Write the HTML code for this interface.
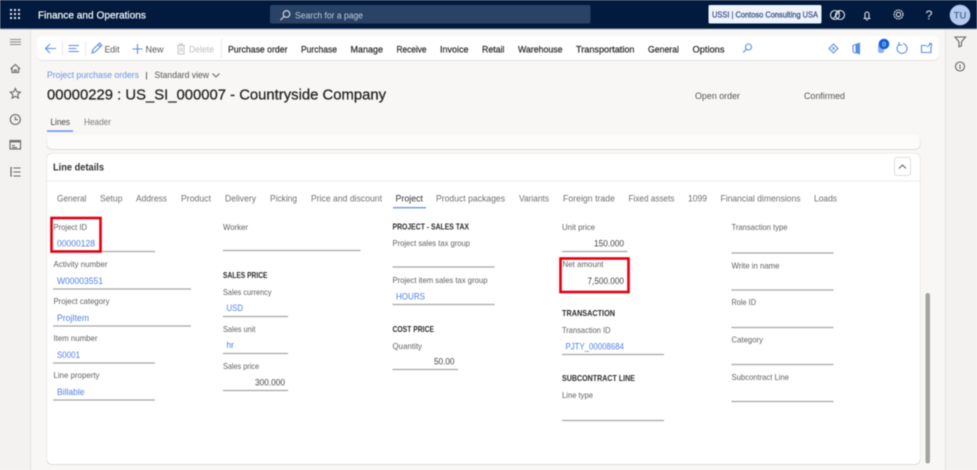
<!DOCTYPE html>
<html lang="en"><head><meta charset="utf-8"><title>Project purchase orders</title>
<style>
html,body{margin:0;padding:0;width:977px;height:470px;overflow:hidden;background:#f8f7f5}
svg{display:block;filter:blur(.45px)}
text{font-family:"Liberation Sans",sans-serif;font-size:9px;white-space:pre}
.l{fill:#616161;font-size:8.5px}
.v{fill:#4f7fe6;font-size:9px}
.n{fill:#444;font-size:9px}
.h{fill:#2a2a2a;font-size:8.5px;font-weight:bold}
.t{fill:#6f6f6f;font-size:9px}
.b{fill:#2b2b2b;font-size:9px;stroke:#2b2b2b;stroke-width:.22}
.u{stroke:#a6a6a6;stroke-width:1.2;fill:none}
.i{fill:none;stroke:#5b8be6;stroke-width:1.1}
.s{fill:none;stroke:#666;stroke-width:1.1}
.w{fill:none;stroke:#dfe3ea;stroke-width:1.1}
</style></head><body>
<svg width="977" height="470" viewBox="0 0 977 470" xmlns="http://www.w3.org/2000/svg">
<!-- backgrounds -->
<rect width="977" height="470" fill="#f8f7f5"/>
<rect x="0" y="29" width="30" height="441" fill="#f3f2f0"/><rect x="30" y="29" width="1" height="441" fill="#e3e2e0"/>
<rect x="945" y="29" width="32" height="441" fill="#f3f2f0"/><rect x="945" y="29" width="1" height="441" fill="#e3e2e0"/>
<!-- top bar -->
<rect width="977" height="28.5" fill="#011a3d"/>
<rect y="28.5" width="977" height="1" fill="#9aa5b5"/>
<g fill="#e6e9ee"><rect x="10" y="9" width="2" height="2"/><rect x="14" y="9" width="2" height="2"/><rect x="18" y="9" width="2" height="2"/><rect x="10" y="13" width="2" height="2"/><rect x="14" y="13" width="2" height="2"/><rect x="18" y="13" width="2" height="2"/><rect x="10" y="17" width="2" height="2"/><rect x="14" y="17" width="2" height="2"/><rect x="18" y="17" width="2" height="2"/></g>
<text x="38" y="18.5" textLength="108" lengthAdjust="spacingAndGlyphs" style="font-size:10.5px;fill:#fff;stroke:#fff;stroke-width:.2">Finance and Operations</text>
<rect x="270" y="5" width="320.500" height="18.500" rx="2" fill="#2a4266"/>
<circle cx="286.500" cy="14" r="3.300" class="w"/><path d="M284 16.500L280.500 20" class="w"/>
<text x="295" y="18.500" textLength="68" lengthAdjust="spacingAndGlyphs" style="fill:#c3ccd9">Search for a page</text>
<rect x="708.500" y="5" width="113" height="18.500" rx="1.500" fill="#eef3fc"/>
<text x="712" y="17.500" textLength="106" lengthAdjust="spacingAndGlyphs" style="font-size:8.500px;fill:#35507f;stroke:#35507f;stroke-width:.25">USSI | Contoso Consulting USA</text>
<circle cx="835" cy="15" r="4.500" class="w"/><circle cx="840" cy="15" r="4.500" class="w"/><path d="M833 19L840 10.500" class="w"/>
<path d="M863.500 18.500h7M865 18c0-1 0-2.500 0-4a2 2 0 0 1 4 0c0 1.500 0 3 0 4M866 20h2" class="w"/>
<circle cx="898.500" cy="14.500" r="4.500" class="w" stroke-dasharray="2 .6"/><circle cx="898.500" cy="14.500" r="2.200" class="w"/>
<text x="925.500" y="19.500" style="font-size:12.500px;fill:#dfe3ea">?</text>
<circle cx="960" cy="15" r="10.300" fill="#b5caf0"/>
<text x="960" y="18.500" text-anchor="middle" style="font-size:9.500px;fill:#2f4d78">TU</text>
<!-- side icons left -->
<path d="M10 39.500h11M10 42h11M10 44.500h11" stroke="#8a8a8a" stroke-width="1.100" fill="none"/>
<path d="M10.500 69l4.800-4.500 4.800 4.500M12 68v4.500h6.600V68M14.300 72.500v-2.500h2v2.500" class="s"/>
<path d="M15.300 88.500l1.500 3.300 3.500.4-2.600 2.400.7 3.500-3.100-1.800-3.100 1.800.7-3.500-2.600-2.400 3.500-.4z" class="s"/>
<circle cx="15.300" cy="119.500" r="5" class="s"/><path d="M15.300 116.500v3.200h2.700" class="s"/>
<rect x="10" y="140.500" width="10.500" height="8.500" class="s" fill="none"/><rect x="10" y="140.500" width="10.500" height="2" fill="#777"/><path d="M12 145.500h3M12 147.500h5" class="s"/>
<path d="M13.500 168h7M13.500 172h7M13.500 176h7M11 167.500v9" class="s"/><rect x="10.300" y="167" width="1.600" height="1.600" fill="#777"/><rect x="10.300" y="171" width="1.600" height="1.600" fill="#777"/><rect x="10.300" y="175" width="1.600" height="1.600" fill="#777"/>
<!-- side icons right -->
<path d="M955 37h10.500l-4 4.800v4l-2.500 1v-5z" class="s" stroke-width="1.300"/>
<circle cx="960" cy="66.500" r="4.500" class="s"/><path d="M960 64.500v4.500" class="s"/>
<!-- toolbar -->
<rect x="37.500" y="37" width="901" height="24" rx="5" fill="#d9d8d6" opacity=".7"/>
<rect x="37" y="36" width="901.500" height="24" rx="5" fill="#fff"/>
<path d="M56 48.500H46M50 44l-4.500 4.500L50 53" class="i"/>
<rect x="62" y="41" width="1" height="15" fill="#e8e8e8"/><rect x="85" y="41" width="1" height="15" fill="#e8e8e8"/><rect x="221" y="39" width="1" height="19" fill="#e8e8e8"/>
<path d="M68.500 45.500h10.500M68.500 48.500h8M68.500 51.500h10.500" class="i"/>
<path d="M92 53l1-3.500 6.500-6.500 2.300 2.300-6.500 6.500zM98 44.500l2.300 2.300" class="i"/>
<text x="104.500" y="52.500" textLength="15" lengthAdjust="spacingAndGlyphs" class="t" style="fill:#555">Edit</text>
<path d="M137.500 44v10M132.500 49h10" class="i"/>
<text x="145.500" y="52.500" textLength="18" lengthAdjust="spacingAndGlyphs" class="t" style="fill:#555">New</text>
<path d="M177 45.500h8M178 45.500v8.500h6v-8.500M179.500 45.500v-1.500h3v1.500M180 47.500v4.500M182 47.500v4.500" fill="none" stroke="#c4c4c4"/>
<text x="189" y="52.500" textLength="25" lengthAdjust="spacingAndGlyphs" style="fill:#bdbdbd">Delete</text>
<text x="228" y="52.500" textLength="59.500" lengthAdjust="spacingAndGlyphs" class="b">Purchase order</text>
<text x="301" y="52.500" textLength="36" lengthAdjust="spacingAndGlyphs" class="b">Purchase</text>
<text x="350.500" y="52.500" textLength="32.500" lengthAdjust="spacingAndGlyphs" class="b">Manage</text>
<text x="396.500" y="52.500" textLength="30" lengthAdjust="spacingAndGlyphs" class="b">Receive</text>
<text x="440" y="52.500" textLength="28.500" lengthAdjust="spacingAndGlyphs" class="b">Invoice</text>
<text x="482" y="52.500" textLength="22.500" lengthAdjust="spacingAndGlyphs" class="b">Retail</text>
<text x="518" y="52.500" textLength="44.500" lengthAdjust="spacingAndGlyphs" class="b">Warehouse</text>
<text x="576" y="52.500" textLength="58.500" lengthAdjust="spacingAndGlyphs" class="b">Transportation</text>
<text x="648" y="52.500" textLength="31" lengthAdjust="spacingAndGlyphs" class="b">General</text>
<text x="692.500" y="52.500" textLength="32" lengthAdjust="spacingAndGlyphs" class="b">Options</text>
<circle cx="748.500" cy="47" r="3" class="i"/><path d="M746.300 49.300L743 52.500" class="i"/>
<path d="M833.500 44l4.500 4.500-4.500 4.500-4.500-4.500z" class="i" stroke-width="1.500"/><circle cx="833.500" cy="48.500" r="1.600" fill="#8fb0ee"/>
<path d="M855.500 44l4.500-1.500v12l-4.500-1.500z" fill="#5b8be6"/><path d="M855.500 44.500l-2.500 1v6l2.500 2" class="i" stroke-width="1.300"/>
<rect x="878" y="44" width="6" height="9" rx="2" fill="#8fb0ee"/>
<circle cx="884" cy="44" r="5.300" fill="#1261d8"/><text x="884" y="46.500" text-anchor="middle" style="font-size:6.500px;fill:#fff">0</text>
<path d="M899 44.500a5 5 0 1 0 4-1" class="i" stroke-width="1.300"/><path d="M899 42v3h3" class="i" stroke-width=".8"/>
<path d="M931 46v6.500h-9.500V45.500h5" class="i" stroke-width="1.200"/><path d="M927 47l4-3.500M929 43.500h2.500v2.500" class="i"/>
<!-- header -->
<text x="47" y="78" textLength="92" lengthAdjust="spacingAndGlyphs" style="fill:#6b93e4">Project purchase orders</text>
<rect x="146" y="72" width="1" height="7.500" fill="#666"/>
<text x="154.500" y="78" textLength="54.500" lengthAdjust="spacingAndGlyphs" style="fill:#555">Standard view</text>
<path d="M212.500 73.500l3.500 3.500 3.500-3.500" class="s"/>
<text x="47" y="99.500" textLength="339" lengthAdjust="spacingAndGlyphs" style="font-size:15px;fill:#222;stroke:#222;stroke-width:.25">00000229 : US_SI_000007 - Countryside Company</text>
<text x="695" y="99" textLength="45" lengthAdjust="spacingAndGlyphs" class="t" style="fill:#555">Open order</text>
<text x="804" y="99" textLength="41" lengthAdjust="spacingAndGlyphs" class="t" style="fill:#555">Confirmed</text>
<text x="50.500" y="125" textLength="19.500" lengthAdjust="spacingAndGlyphs" style="fill:#444">Lines</text>
<text x="84" y="125" textLength="27" lengthAdjust="spacingAndGlyphs" style="fill:#7a7a7a">Header</text>
<rect x="47" y="130.300" width="26" height="1.600" fill="#6d97e8"/>
<!-- cards -->
<rect x="46.500" y="136" width="874" height="14" rx="5" fill="#dedddb"/>
<rect x="47" y="135" width="873" height="14" rx="5" fill="#fdfcfb"/>
<rect x="46.500" y="153" width="874" height="312" rx="5" fill="#dddcda"/>
<rect x="47" y="153.500" width="873" height="310.500" rx="5" fill="#fff"/>
<rect x="47" y="180.500" width="873" height="1.200" fill="#eeeded"/>
<text x="53" y="170.500" textLength="51" lengthAdjust="spacingAndGlyphs" style="font-size:10px;font-weight:bold;fill:#333">Line details</text>
<rect x="894.500" y="157.500" width="16" height="18" rx="2" fill="#fff" stroke="#ddd"/>
<path d="M899 168.500l3.500-3.500 3.500 3.500" class="s"/>
<!-- tabs -->
<g class="t">
<text x="57" y="201.500" textLength="29.500" lengthAdjust="spacingAndGlyphs" class="t">General</text>
<text x="100" y="201.500" textLength="22.500" lengthAdjust="spacingAndGlyphs" class="t">Setup</text>
<text x="136" y="201.500" textLength="31" lengthAdjust="spacingAndGlyphs" class="t">Address</text>
<text x="181" y="201.500" textLength="30" lengthAdjust="spacingAndGlyphs" class="t">Product</text>
<text x="225" y="201.500" textLength="31" lengthAdjust="spacingAndGlyphs" class="t">Delivery</text>
<text x="270" y="201.500" textLength="27" lengthAdjust="spacingAndGlyphs" class="t">Picking</text>
<text x="311" y="201.500" textLength="71" lengthAdjust="spacingAndGlyphs" class="t">Price and discount</text>
<text x="395.500" y="201.500" textLength="27.500" lengthAdjust="spacingAndGlyphs" style="fill:#333">Project</text>
<text x="436" y="201.500" textLength="69" lengthAdjust="spacingAndGlyphs" class="t">Product packages</text>
<text x="519" y="201.500" textLength="30" lengthAdjust="spacingAndGlyphs" class="t">Variants</text>
<text x="563" y="201.500" textLength="52" lengthAdjust="spacingAndGlyphs" class="t">Foreign trade</text>
<text x="628.500" y="201.500" textLength="46" lengthAdjust="spacingAndGlyphs" class="t">Fixed assets</text>
<text x="688" y="201.500" textLength="19" lengthAdjust="spacingAndGlyphs" class="t">1099</text>
<text x="720.500" y="201.500" textLength="80" lengthAdjust="spacingAndGlyphs" class="t">Financial dimensions</text>
<text x="814" y="201.500" textLength="23" lengthAdjust="spacingAndGlyphs" class="t">Loads</text>
</g>
<rect x="393" y="207" width="33" height="1.400" fill="#6d97e8"/>
<!-- col 1 -->
<text x="53.500" y="230" textLength="33.500" lengthAdjust="spacingAndGlyphs" class="l">Project ID</text>
<text x="57" y="246.500" textLength="38" lengthAdjust="spacingAndGlyphs" class="v">00000128</text>
<path d="M53 251.500h102" class="u"/>
<text x="53.500" y="267" textLength="54" lengthAdjust="spacingAndGlyphs" class="l">Activity number</text>
<text x="57" y="284" textLength="46" lengthAdjust="spacingAndGlyphs" class="v">W00003551</text>
<path d="M53 289h138" class="u"/>
<text x="53.500" y="304" textLength="56" lengthAdjust="spacingAndGlyphs" class="l">Project category</text>
<text x="57" y="321" textLength="32" lengthAdjust="spacingAndGlyphs" class="v">ProjItem</text>
<path d="M53 326h138" class="u"/>
<text x="53.500" y="341" textLength="44" lengthAdjust="spacingAndGlyphs" class="l">Item number</text>
<text x="57" y="358" textLength="23" lengthAdjust="spacingAndGlyphs" class="v">S0001</text>
<path d="M53 363h102" class="u"/>
<text x="53.500" y="378" textLength="46" lengthAdjust="spacingAndGlyphs" class="l">Line property</text>
<text x="57" y="395" textLength="27.500" lengthAdjust="spacingAndGlyphs" class="v">Billable</text>
<path d="M53 400h102" class="u"/>
<!-- col 2 -->
<text x="223" y="230" textLength="25" lengthAdjust="spacingAndGlyphs" class="l">Worker</text>
<path d="M223 250.500h137.500" class="u"/>
<text x="223" y="278" textLength="44.500" lengthAdjust="spacingAndGlyphs" class="h">SALES PRICE</text>
<text x="223" y="295" textLength="48.500" lengthAdjust="spacingAndGlyphs" class="l">Sales currency</text>
<text x="226.500" y="311" textLength="16.500" lengthAdjust="spacingAndGlyphs" class="v">USD</text>
<path d="M223 316.500h65" class="u"/>
<text x="223" y="332" textLength="32.500" lengthAdjust="spacingAndGlyphs" class="l">Sales unit</text>
<text x="226.500" y="348" textLength="7.500" lengthAdjust="spacingAndGlyphs" class="v">hr</text>
<path d="M223 353.500h65" class="u"/>
<text x="223" y="369" textLength="36" lengthAdjust="spacingAndGlyphs" class="l">Sales price</text>
<text x="255" y="385.500" textLength="30" lengthAdjust="spacingAndGlyphs" class="n">300.000</text>
<path d="M223 390.500h65" class="u"/>
<!-- col 3 -->
<text x="392.500" y="229.500" textLength="76.500" lengthAdjust="spacingAndGlyphs" class="h">PROJECT - SALES TAX</text>
<text x="392.500" y="246" textLength="77.500" lengthAdjust="spacingAndGlyphs" class="l">Project sales tax group</text>
<path d="M392.500 267h102" class="u"/>
<text x="392.500" y="283" textLength="95" lengthAdjust="spacingAndGlyphs" class="l">Project item sales tax group</text>
<text x="396" y="299.500" textLength="29" lengthAdjust="spacingAndGlyphs" class="v">HOURS</text>
<path d="M392.500 304.500h102" class="u"/>
<text x="392.500" y="332" textLength="41.500" lengthAdjust="spacingAndGlyphs" class="h">COST PRICE</text>
<text x="392.500" y="349" textLength="29.500" lengthAdjust="spacingAndGlyphs" class="l">Quantity</text>
<text x="434" y="364.500" textLength="20.500" lengthAdjust="spacingAndGlyphs" class="n">50.00</text>
<path d="M392.500 369.500h65.500" class="u"/>
<!-- col 4 -->
<text x="562" y="230" textLength="33" lengthAdjust="spacingAndGlyphs" class="l">Unit price</text>
<text x="594" y="246.500" textLength="30" lengthAdjust="spacingAndGlyphs" class="n">150.000</text>
<path d="M562 251.500h65.500" class="u"/>
<text x="562.500" y="267" textLength="41" lengthAdjust="spacingAndGlyphs" class="l">Net amount</text>
<text x="587.500" y="284" textLength="36.500" lengthAdjust="spacingAndGlyphs" class="n">7,500.000</text>
<text x="562" y="316" textLength="53" lengthAdjust="spacingAndGlyphs" class="h">TRANSACTION</text>
<text x="562" y="333" textLength="48.500" lengthAdjust="spacingAndGlyphs" class="l">Transaction ID</text>
<text x="565.500" y="349.500" textLength="58.500" lengthAdjust="spacingAndGlyphs" class="v">PJTY_00008684</text>
<path d="M562 354.500h102" class="u"/>
<text x="562" y="381" textLength="73" lengthAdjust="spacingAndGlyphs" class="h">SUBCONTRACT LINE</text>
<text x="562" y="398" textLength="31" lengthAdjust="spacingAndGlyphs" class="l">Line type</text>
<path d="M562 420.500h102" class="u"/>
<!-- col 5 -->
<text x="731.500" y="230" textLength="56" lengthAdjust="spacingAndGlyphs" class="l">Transaction type</text>
<path d="M731.500 253h102" class="u"/>
<text x="731.500" y="268.500" textLength="48" lengthAdjust="spacingAndGlyphs" class="l">Write in name</text>
<path d="M731.500 290h102" class="u"/>
<text x="731.500" y="305" textLength="24.500" lengthAdjust="spacingAndGlyphs" class="l">Role ID</text>
<path d="M731.500 327.500h102" class="u"/>
<text x="731.500" y="342.500" textLength="31.500" lengthAdjust="spacingAndGlyphs" class="l">Category</text>
<path d="M731.500 364.500h102" class="u"/>
<text x="731.500" y="380" textLength="57.500" lengthAdjust="spacingAndGlyphs" class="l">Subcontract Line</text>
<path d="M731.500 401.500h102" class="u"/>
<!-- scrollbar -->
<rect x="925.500" y="293" width="4.500" height="170.500" rx="2.200" fill="#a4a4a2"/>
<!-- highlight boxes -->
<rect x="51.500" y="218" width="49" height="33.500" fill="none" stroke="#e0000f" stroke-width="2.600"/>
<rect x="560.500" y="258.500" width="68" height="33.500" fill="none" stroke="#e0000f" stroke-width="2.600"/>
</svg>
</body></html>
